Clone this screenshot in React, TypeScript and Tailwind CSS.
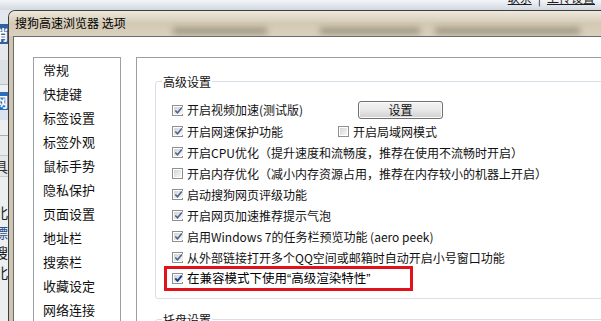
import type { ReactNode } from 'react'

const cjk = "font-['Noto_Sans_CJK_SC','Microsoft_YaHei',sans-serif]"

const navItems = ['常规', '快捷键', '标签设置', '标签外观', '鼠标手势', '隐私保护', '页面设置', '地址栏', '搜索栏', '收藏设定', '网络连接']

function Check({ on, strong }: { on: boolean; strong?: boolean }) {
  return (
    <span className="w-[11px] h-[11px] shrink-0 flex border border-[#8e8f8f] bg-white p-px">
      <span className="flex-1 flex items-center justify-center bg-linear-to-br from-[#d2d4d6] to-[#f7f7f7]">
        {on && (
          <svg width="9" height="9" viewBox="0 0 9 9">
            <path
              d="M1.3 4.4 L3.5 6.8 L7.8 1.6"
              fill="none"
              stroke={strong ? '#1b3c8c' : '#4c628e'}
              strokeWidth={strong ? 1.9 : 1.5}
            />
          </svg>
        )}
      </span>
    </span>
  )
}

function Option({ on, children, w, strong }: { on: boolean; children: ReactNode; w?: string; strong?: boolean }) {
  return (
    <div className={`flex items-center gap-[4px] shrink-0 ${w ?? ''}`}>
      <Check on={on} strong={strong} />
      <span className={strong ? 'text-[12.5px] leading-[16px] text-black whitespace-nowrap' : 'text-[12px] leading-[16px] text-[#111] whitespace-nowrap'}>
        {children}
      </span>
    </div>
  )
}

function GroupBox({ title, children }: { title: string; children?: ReactNode }) {
  return (
    <div className="relative w-[520px] shrink-0 border border-[#d5dfe5] rounded-[3px] pt-[17px] pb-[9px]">
      <span className="absolute -top-[8px] left-[6px] bg-white px-px text-[12px] leading-[16px] text-[#111]">{title}</span>
      {children}
    </div>
  )
}

function LeftStrip() {
  // part of the browser window behind the dialog
  const glyph = (t: string, bg: string, color: string) => (
    <div className={`h-[20px] flex justify-end items-center overflow-hidden ${bg}`}>
      <span className={`text-[14px] leading-[16px] whitespace-nowrap ${color}`}>{t}</span>
    </div>
  )
  return (
    <div className="w-[8px] shrink-0 flex flex-col overflow-hidden">
      <div className="h-[14px] bg-[#e3e8ee]" />
      <div className="h-[20px] bg-[#2f609f] flex justify-end items-center overflow-hidden">
        <span className="text-[14px] leading-[16px] font-bold text-white whitespace-nowrap">消</span>
      </div>
      <div className="h-[16px] bg-[#e6e9ec]" />
      <div className="h-[24px] bg-[#dce1e6]" />
      <div className="h-[8px] bg-[#eef0f2] border-t border-[#b9bec4]" />
      <div className="h-[18px] bg-[#2c6cbc] flex justify-end items-center overflow-hidden">
        <span className="text-[14px] leading-[16px] font-bold text-white whitespace-nowrap">网</span>
      </div>
      <div className="h-[10px] bg-[#d9e4f0]" />
      <div className="h-[16px] bg-[#eceef0] border-b border-[#a9aeb4]" />
      <div className="h-[20px] bg-[#e8eaec] border-b border-[#c2c6ca]" />
      {glyph('具', 'bg-[#e4e6e8]', 'text-[#333]')}
      <div className="h-[20px] bg-[#eceef0] border-t border-[#c8ccd0]" />
      <div className="h-[6px] bg-[#eceef0]" />
      {glyph('北', 'bg-[#eceef0]', 'text-[#222]')}
      {glyph('標', 'bg-[#eceef0]', 'text-[#2a4f8a]')}
      {glyph('搜', 'bg-[#eceef0]', 'text-[#222]')}
      {glyph('北', 'bg-[#eceef0]', 'text-[#222]')}
      <div className="flex-1 bg-[#eceef0]" />
    </div>
  )
}

export default function App() {
  return (
    <div className={`w-[601px] h-[321px] overflow-hidden flex flex-col bg-[#e4e9ef] ${cjk}`}>
      {/* browser toolbar behind */}
      <div className="h-[10px] shrink-0 flex justify-end items-end overflow-hidden bg-linear-to-b from-[#f3f5f7] to-[#d2d9e1] pr-[6px]">
        <div className="flex items-end gap-[6px] mb-[5px] text-[12px] leading-[14px] text-[#1d1d1d]">
          <span className="underline">联系</span>
          <span>|</span>
          <span className="underline">上传设置</span>
        </div>
      </div>

      <div className="flex flex-1 min-h-0">
        <LeftStrip />

        {/* dialog window */}
        <div className="flex-1 min-w-0 flex flex-col rounded-tl-[7px] border-l border-t border-[#3e3e3e] bg-[#cdc5b1] overflow-hidden">
          {/* title bar */}
          <div className="relative h-[25px] shrink-0 flex items-center pl-[6px] pb-[2px] bg-linear-to-b from-[#eee9de] via-[#d3c9b3] to-[#d9d0be] overflow-hidden">
            <div className="absolute top-[17px] left-[164px] w-[94px] h-[6px] bg-[#6f6758] blur-[3px] opacity-60" />
            <div className="absolute top-[17px] left-[311px] w-[100px] h-[6px] bg-[#6f6758] blur-[3px] opacity-60" />
            <div className="absolute top-[17px] left-[426px] w-[145px] h-[6px] bg-[#6f6758] blur-[3px] opacity-60" />
            <span className="relative text-[12px] leading-[16px] text-black whitespace-nowrap">搜狗高速浏览器 选项</span>
          </div>

          <div className="flex-1 min-h-0 flex pl-[4px]">
            {/* client area */}
            <div className="flex-1 min-w-0 flex gap-[15px] bg-white border-l border-t border-[#6a6a6a] pl-[19px] pt-[20px] overflow-hidden">
              {/* nav list */}
              <div className="w-[88px] h-[300px] shrink-0 border border-[#9aa0a8] flex flex-col">
                {navItems.map((n) => (
                  <div key={n} className="h-[24px] shrink-0 flex items-center pl-[9px] text-[13px] leading-[16px] text-[#111]">
                    {n}
                  </div>
                ))}
              </div>

              {/* settings page */}
              <div className="w-[560px] h-[300px] shrink-0 border border-[#9aa0a8] pl-[18px] pt-[23px] flex flex-col">
                <GroupBox title="高级设置">
                  <div className="h-[22px] flex items-center pl-[16px]">
                    <Option on w="w-[186px]">开启视频加速(测试版)</Option>
                    <button className="w-[85px] h-[18px] border border-[#707070] rounded-[3px] bg-linear-to-b from-[#f3f3f3] via-[#e8e8e8] to-[#d0d0d0] shadow-[inset_0_0_0_1px_#fbfbfb] text-[12px] leading-[14px] text-[#111]">
                      设置
                    </button>
                  </div>
                  <div className="h-[21px] flex items-center pl-[16px]">
                    <Option on w="w-[166px]">开启网速保护功能</Option>
                    <Option on={false}>开启局域网模式</Option>
                  </div>
                  <div className="h-[21px] flex items-center pl-[16px]">
                    <Option on>开启CPU优化（提升速度和流畅度，推荐在使用不流畅时开启）</Option>
                  </div>
                  <div className="h-[21px] flex items-center pl-[16px]">
                    <Option on={false}>开启内存优化（减小内存资源占用，推荐在内存较小的机器上开启）</Option>
                  </div>
                  <div className="h-[21px] flex items-center pl-[16px]">
                    <Option on>启动搜狗网页评级功能</Option>
                  </div>
                  <div className="h-[21px] flex items-center pl-[16px]">
                    <Option on>开启网页加速推荐提示气泡</Option>
                  </div>
                  <div className="h-[21px] flex items-center pl-[16px]">
                    <Option on>启用Windows 7的任务栏预览功能 (aero peek)</Option>
                  </div>
                  <div className="h-[21px] flex items-center pl-[16px]">
                    <Option on>从外部链接打开多个QQ空间或邮箱时自动开启小号窗口功能</Option>
                  </div>
                  <div className="relative h-[21px] flex items-center pl-[16px]">
                    <Option on strong>
                      在兼容模式下使用<span className="font-['Liberation_Sans',sans-serif]">“</span>高级渲染特性<span className="font-['Liberation_Sans',sans-serif]">”</span>
                    </Option>
                    {/* annotation box */}
                    <div className="absolute left-[8px] -top-[2px] w-[249px] h-[25px] border-[3px] border-[#e1121c]" />
                  </div>
                </GroupBox>

                <div className="mt-[20px]">
                  <GroupBox title="托盘设置">
                    <div className="h-[40px]" />
                  </GroupBox>
                </div>
              </div>
            </div>
          </div>
        </div>
      </div>
    </div>
  )
}
